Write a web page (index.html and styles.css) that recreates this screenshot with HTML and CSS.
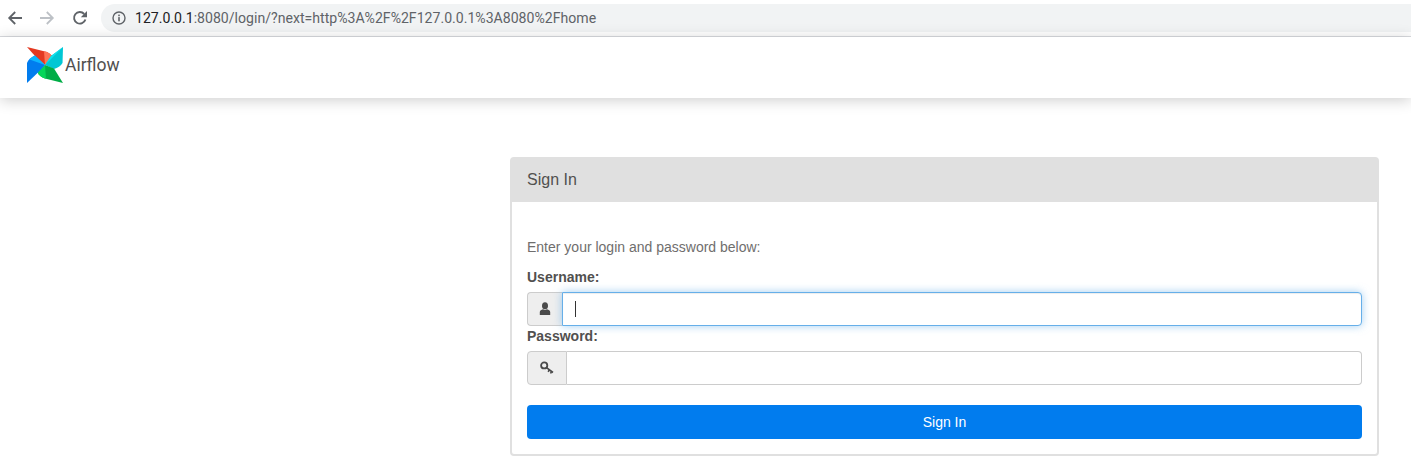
FILE: index.html
```html
<!DOCTYPE html>
<html lang="en">
<head>
<meta charset="utf-8">
<title>Airflow - Sign In</title>
<link rel="stylesheet" href="styles.css">
</head>
<body>
<div class="chrome">
  <svg class="nav-icon" viewBox="0 0 16 16"><path d="M15 8H2.5M8.2 2L2.2 8L8.2 14" fill="none" stroke="#5f6368" stroke-width="1.8"/></svg>
  <svg class="nav-icon" viewBox="0 0 16 16"><path d="M1 8H13.5M7.8 2L13.8 8L7.8 14" fill="none" stroke="#bdc1c6" stroke-width="1.8"/></svg>
  <svg class="nav-icon reload" viewBox="0 0 16 16"><path d="M13.4 9.5A5.8 5.8 0 1 1 12.2 4" fill="none" stroke="#5f6368" stroke-width="1.9"/><path d="M15 1V7.2H8.8Z" fill="#5f6368"/></svg>
  <div class="omnibox">
    <svg class="info" viewBox="0 0 14 14"><circle cx="7" cy="7" r="6" fill="none" stroke="#5f6368" stroke-width="1.4"/><rect x="6.2" y="6.1" width="1.6" height="4.2" fill="#5f6368"/><rect x="6.2" y="3.6" width="1.6" height="1.6" fill="#5f6368"/></svg>
    <span class="url"><span class="host">127.0.0.1</span>:8080/login/?next=http%3A%2F%2F127.0.0.1%3A8080%2Fhome</span>
  </div>
</div>
<header class="navbar">
  <svg class="logo" viewBox="0 0 36 36">
    <path d="M0 0L20 5C23.5 6.5 26 9.5 26.5 13L18 18L8 9Z" fill="#e43921"/>
    <path d="M17 4.2L20 5C23.5 6.5 26 9.5 26.5 13L18 18Z" fill="#ff7557"/>
    <path d="M36 0L35.5 16C34 19 30.5 21 27 22L18 18L24 9Z" fill="#00c7d4"/>
    <path d="M36 0L18 18L24 9Z" fill="#11e1ee"/>
    <path d="M36 36L18 31.5C14.5 30.5 11.5 28 10.5 25L18 18L27 21.5Z" fill="#00ad46"/>
    <path d="M10.5 25L18 18L19 31.8L18 31.5C14.5 30.5 11.5 28 10.5 25Z" fill="#04d659"/>
    <path d="M0 36L0 16C1 13 4 10 8 8.5L18 18L10.5 26Z" fill="#017cee"/>
    <path d="M8 8.5L18 18L2.5 12.5C4 10.8 5.8 9.4 8 8.5Z" fill="#0cb6ff"/>
  </svg>
  <span class="brand">Airflow</span>
</header>
<main class="page">
  <section class="panel">
    <div class="panel-head">Sign In</div>
    <form class="panel-body">
      <p class="hint">Enter your login and password below:</p>
      <label class="field-label" for="username">Username:</label>
      <div class="input-group">
        <span class="addon addon-user">
          <svg class="glyph" viewBox="0 0 12 14"><ellipse cx="6" cy="3.8" rx="3" ry="3.5" fill="#4a4a4a"/><path d="M0.8 13V10C0.8 8.4 2.4 7.6 4 7.2L6 8L8 7.2C9.6 7.6 11.2 8.4 11.2 10V13Z" fill="#4a4a4a"/></svg>
        </span>
        <div class="control focused" id="username"><span class="caret"></span></div>
      </div>
      <label class="field-label field-label-pw" for="password">Password:</label>
      <div class="input-group">
        <span class="addon addon-key">
          <svg class="glyph" viewBox="0 0 14 14"><ellipse cx="4.2" cy="4.4" rx="3.1" ry="3" fill="none" stroke="#4a4a4a" stroke-width="1.8"/><path d="M6.5 6.6L13 11.5M9.2 8.8L8.2 10.8M11.4 10.4L10.6 12.6" fill="none" stroke="#4a4a4a" stroke-width="1.6"/></svg>
        </span>
        <input class="control" id="password" type="password">
      </div>
      <button class="submit" type="button">Sign In</button>
    </form>
  </section>
</main>
</body>
</html>
```
FILE: styles.css
```css
html, body {
  margin: 0;
  height: 465px;
  overflow: hidden;
  background: #fff;
  font-family: "Liberation Sans", Arial, sans-serif;
}
.chrome {
  height: 36px;
  display: flex;
  align-items: center;
  border-bottom: 1px solid #dadce0;
  box-sizing: content-box;
}
.nav-icon {
  width: 16px;
  height: 16px;
  margin-left: 7px;
  margin-right: 9px;
  flex: none;
}
.reload { margin-left: 8px; margin-right: 0; }
.omnibox {
  margin-left: 13px;
  flex: 1;
  height: 28px;
  background: #f1f3f4;
  border-radius: 14px 0 0 14px;
  display: flex;
  align-items: center;
  padding-left: 11px;
}
.info { width: 14px; height: 14px; flex: none; }
.url {
  margin-left: 9px;
  font-family: Roboto, "Noto Sans", sans-serif;
  font-size: 14.1px;
  color: #5f6368;
  white-space: nowrap;
}
.host { color: #202124; }
.navbar {
  height: 61px;
  box-sizing: border-box;
  padding: 0 0 6px 27px;
  display: flex;
  align-items: center;
  background: #fff;
  box-shadow: 0 2px 14px rgba(0,0,0,0.2);
  position: relative;
}
.logo { width: 36px; height: 36px; flex: none; }
.brand {
  margin-left: 2px;
  padding-top: 1px;
  font-family: Roboto, "Noto Sans", sans-serif;
  font-size: 17.5px;
  color: #51504f;
}
.page {
  padding: 59px 32px 0 510px;
}
.panel {
  width: 869px;
  height: 299px;
  box-sizing: border-box;
  border: 2px solid #e0e0e0;
  border-radius: 4px;
  background: #fff;
}
.panel-head {
  height: 43px;
  line-height: 42px;
  background: #e0e0e0;
  padding-left: 15px;
  font-size: 16px;
  color: #51504f;
}
.panel-body {
  padding: 0 15px;
  display: flex;
  flex-direction: column;
}
.hint {
  margin: 37px 0 0;
  font-size: 14px;
  line-height: 16px;
  color: #6f6e6d;
}
.field-label {
  margin-top: 14px;
  font-size: 14px;
  line-height: 16px;
  font-weight: 700;
  color: #51504f;
}
.field-label-pw { margin-top: 2px; }
.input-group {
  display: flex;
  height: 34px;
  margin-top: 7px;
}
.addon {
  flex: none;
  box-sizing: border-box;
  display: flex;
  align-items: center;
  justify-content: center;
  background: #eee;
  border: 1px solid #ccc;
  border-right: 0;
  border-radius: 4px 0 0 4px;
}
.addon-user { width: 35px; }
.addon-key { width: 40px; border-right: 1px solid #ccc; }
.glyph { width: 12px; height: 14px; }
.addon-key .glyph { width: 14px; }
.control {
  flex: 1;
  min-width: 0;
  box-sizing: border-box;
  height: 34px;
  margin: 0;
  padding: 0 12px;
  background: #fff;
  border: 1px solid #ccc;
  border-left: 0;
  border-radius: 0 4px 4px 0;
  outline: none;
  display: flex;
  align-items: center;
}
.focused {
  border: 1px solid #66afe9;
  box-shadow: inset 0 1px 1px rgba(0,0,0,0.075), 0 0 8px rgba(102,175,233,0.6);
}
.caret {
  width: 1px;
  height: 16px;
  background: #333;
}
.submit {
  margin-top: 20px;
  height: 34px;
  border: 0;
  border-radius: 4px;
  background: #017cee;
  color: #fff;
  font-family: inherit;
  font-size: 14px;
}
```
